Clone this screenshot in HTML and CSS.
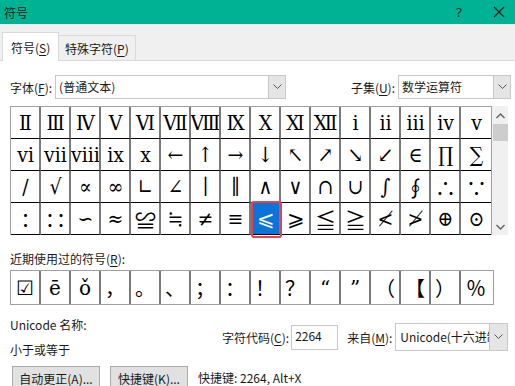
FILE: index.html
```html
<!DOCTYPE html>
<html lang="zh-CN">
<head>
    <meta charset="UTF-8">
    <title>符号</title>
    <link rel="stylesheet" href="styles.css">
</head>
<body>
<div class="dialog">
    <div class="titlebar">
        <span class="title">符号</span>
        <span class="help">?</span>
        <svg class="close" width="12" height="12" viewBox="0 0 12 12"><path d="M1 1L11 11M11 1L1 11" stroke="#1a1a1a" stroke-width="1.2" fill="none"/></svg>
    </div>

    <div class="tabs">
        <div class="tab active">符号(<u>S</u>)</div>
        <div class="tab">特殊字符(<u>P</u>)</div>
    </div>

    <div class="panel">
        <div class="font-row">
            <span class="label">字体(<u>F</u>):</span>
            <div class="select font-select">
                <span class="value">(普通文本)</span>
                <span class="arrow"><svg width="9" height="6" viewBox="0 0 9 6"><path d="M0.5 0.5L4.5 4.5L8.5 0.5" stroke="#555" fill="none"/></svg></span>
            </div>
            <span class="label subset-label">子集(<u>U</u>):</span>
            <div class="select subset-select">
                <span class="value">数学运算符</span>
                <span class="arrow"><svg width="9" height="6" viewBox="0 0 9 6"><path d="M0.5 0.5L4.5 4.5L8.5 0.5" stroke="#555" fill="none"/></svg></span>
            </div>
        </div>

        <div class="chars">
            <div class="grid">
                <div class="cell">Ⅱ</div><div class="cell">Ⅲ</div><div class="cell">Ⅳ</div><div class="cell">Ⅴ</div>
                <div class="cell">Ⅵ</div><div class="cell">Ⅶ</div><div class="cell">Ⅷ</div><div class="cell">Ⅸ</div>
                <div class="cell">Ⅹ</div><div class="cell">Ⅺ</div><div class="cell">Ⅻ</div><div class="cell">ⅰ</div>
                <div class="cell">ⅱ</div><div class="cell">ⅲ</div><div class="cell">ⅳ</div><div class="cell">ⅴ</div>

                <div class="cell">ⅵ</div><div class="cell">ⅶ</div><div class="cell">ⅷ</div><div class="cell">ⅸ</div>
                <div class="cell">ⅹ</div><div class="cell">←</div><div class="cell">↑</div><div class="cell">→</div>
                <div class="cell">↓</div><div class="cell">↖</div><div class="cell">↗</div><div class="cell">↘</div>
                <div class="cell">↙</div><div class="cell">∈</div><div class="cell">∏</div><div class="cell">∑</div>

                <div class="cell">∕</div><div class="cell">√</div><div class="cell">∝</div><div class="cell">∞</div>
                <div class="cell">∟</div><div class="cell">∠</div><div class="cell">∣</div><div class="cell">∥</div>
                <div class="cell">∧</div><div class="cell">∨</div><div class="cell">∩</div><div class="cell">∪</div>
                <div class="cell">∫</div><div class="cell">∮</div><div class="cell">∴</div><div class="cell">∵</div>

                <div class="cell">∶</div><div class="cell">∷</div><div class="cell">∽</div><div class="cell">≈</div>
                <div class="cell">≌</div><div class="cell">≒</div><div class="cell">≠</div><div class="cell">≡</div>
                <div class="cell selected">⩽</div><div class="cell">⩾</div><div class="cell">≦</div><div class="cell">≧</div>
                <div class="cell">≮</div><div class="cell">≯</div><div class="cell">⊕</div><div class="cell">⊙</div>
            </div>
            <div class="scrollbar">
                <svg class="scroll-up" width="9" height="6" viewBox="0 0 9 6"><path d="M0.5 5L4.5 1L8.5 5" stroke="#606060" stroke-width="1.4" fill="none"/></svg>
                <div class="thumb"></div>
                <svg class="scroll-down" width="9" height="6" viewBox="0 0 9 6"><path d="M0.5 1L4.5 5L8.5 1" stroke="#606060" stroke-width="1.4" fill="none"/></svg>
            </div>
        </div>

        <div class="recent-label">近期使用过的符号(<u>R</u>):</div>
        <div class="recent">
            <div class="cell">☑</div><div class="cell">ē</div><div class="cell">ǒ</div><div class="cell">，</div>
            <div class="cell">。</div><div class="cell">、</div><div class="cell">；</div><div class="cell">：</div>
            <div class="cell">！</div><div class="cell">？</div><div class="cell">“</div><div class="cell">”</div>
            <div class="cell">（</div><div class="cell">【</div><div class="cell">）</div><div class="cell">％</div>
        </div>

        <div class="info-row">
            <div class="names">
                <div>Unicode 名称:</div>
                <div>小于或等于</div>
            </div>
            <span class="label code-label">字符代码(<u>C</u>):</span>
            <div class="code-input">2264</div>
            <span class="label from-label">来自(<u>M</u>):</span>
            <div class="select from-select">
                <span class="value">Unicode(十六进制)</span>
                <span class="arrow"><svg width="9" height="6" viewBox="0 0 9 6"><path d="M0.5 0.5L4.5 4.5L8.5 0.5" stroke="#555" fill="none"/></svg></span>
            </div>
        </div>

        <div class="button-row">
            <div class="btn btn-auto">自动更正(<u>A</u>)...</div>
            <div class="btn btn-key">快捷键(<u>K</u>)...</div>
            <span class="shortcut">快捷键: 2264, Alt+X</span>
        </div>
    </div>
</div>
</body>
</html>
```

FILE: styles.css
```css
body {
    margin: 0;
    width: 515px;
    height: 386px;
    overflow: hidden;
    background: #ffffff;
    font-family: "Noto Sans CJK SC", "Noto Sans", sans-serif;
    font-size: 12px;
    color: #1a1a1a;
}
u {
    text-decoration-thickness: 1px;
    text-underline-offset: 2px;
}

.titlebar {
    height: 24px;
    background: #00b294;
    display: flex;
    align-items: center;
    padding-left: 4px;
}
.title {
    font-size: 12px;
    flex: 1;
}
.help {
    font-family: "Noto Sans", sans-serif;
    font-size: 13px;
    margin-right: 31px;
}
.close {
    margin-right: 10px;
}

.tabs {
    height: 37px;
    background: #f0f0f0;
    border-bottom: 1px solid #dadada;
    display: flex;
    align-items: flex-end;
    padding-left: 2px;
    box-sizing: border-box;
}
.tab {
    height: 25px;
    padding: 0 6px;
    border: 1px solid #dadada;
    border-bottom: none;
    border-left: none;
    display: flex;
    align-items: center;
    box-sizing: border-box;
}
.tab.active {
    height: 29px;
    width: 57px;
    background: #ffffff;
    border-left: 1px solid #dadada;
    margin-bottom: -1px;
    padding-left: 8px;
}

.panel {
    padding: 14px 4px 0 10px;
}

.font-row {
    display: flex;
    align-items: center;
    height: 24px;
}
.label {
    white-space: nowrap;
}
.select {
    height: 24px;
    border: 1px solid #c8c8c8;
    box-sizing: border-box;
    display: flex;
    align-items: stretch;
    background: #ffffff;
}
.select .value {
    flex: 1;
    padding-left: 3px;
    line-height: 21px;
    overflow: hidden;
    white-space: nowrap;
}
.select .arrow {
    width: 16px;
    background: #e5e5e5;
    border-left: 1px solid #c8c8c8;
    display: flex;
    align-items: center;
    justify-content: center;
}
.font-select {
    width: 231px;
    margin-left: 3px;
}
.subset-label {
    margin-left: auto;
    margin-right: 3px;
}
.subset-select {
    width: 113px;
}

.chars {
    display: flex;
    margin-top: 7px;
}
.grid {
    display: grid;
    grid-template-columns: repeat(16, 30px);
    border: 1px solid #a0a0a0;
    border-bottom: none;
}
.grid .cell {
    height: 31px;
    border-right: 2px solid #7a7a7a;
    border-bottom: 1px solid #000000;
    display: flex;
    align-items: center;
    justify-content: center;
    font-family: "DejaVu Serif Condensed", "DejaVu Serif", "Liberation Serif", serif;
    font-stretch: condensed;
    font-size: 21px;
    letter-spacing: -1px;
    color: #000000;
    overflow: hidden;
    white-space: nowrap;
}
.grid .cell:nth-child(16n) {
    border-right: none;
}
.grid .cell.selected {
    position: relative;
    background: #0a74d8;
    color: #ffffff;
    overflow: visible;
}
.grid .cell.selected::after {
    content: "";
    position: absolute;
    left: 0;
    top: -2px;
    right: -3px;
    bottom: -4px;
    border: 2px solid #e8404c;
    border-radius: 3px;
}
.scrollbar {
    width: 16px;
    background: #f0f0f0;
    display: flex;
    flex-direction: column;
    align-items: center;
    height: 129px;
}
.scroll-up {
    margin-top: 7px;
}
.thumb {
    width: 15px;
    height: 17px;
    background: #cdcdcd;
    margin-top: 5px;
}
.scroll-down {
    margin-top: auto;
    margin-bottom: 5px;
}

.recent-label {
    margin-top: 16px;
    line-height: 16px;
}
.recent {
    margin-top: 3px;
    display: grid;
    grid-template-columns: repeat(16, 30px);
    border: 1px solid #a0a0a0;
    width: 484px;
    box-sizing: border-box;
}
.recent .cell {
    height: 33px;
    border-right: 2px solid #7a7a7a;
    display: flex;
    align-items: center;
    justify-content: center;
    font-family: "DejaVu Serif", "Liberation Serif", "Noto Sans CJK SC", serif;
    font-size: 20px;
    color: #000000;
}
.recent .cell:last-child {
    border-right: none;
}

.info-row {
    display: flex;
    align-items: center;
    margin-top: 7px;
}
.names {
    width: 212px;
    line-height: 25px;
}
.code-input {
    width: 47px;
    height: 25px;
    border: 1px solid #c8c8c8;
    box-sizing: border-box;
    padding-left: 3px;
    line-height: 20px;
    margin-left: 2px;
}
.from-label {
    margin-left: 9px;
    margin-right: 3px;
}
.from-select {
    width: 113px;
    height: 28px;
    margin-right: -3px;
}
.from-select .value {
    line-height: 25px;
    padding-left: 4px;
}
.from-select .arrow {
    width: 17px;
}

.button-row {
    display: flex;
    align-items: flex-start;
    margin-top: 4px;
}
.btn {
    height: 24px;
    background: #e1e1e1;
    border: 1px solid #adadad;
    box-sizing: border-box;
    display: flex;
    align-items: center;
    justify-content: center;
}
.btn-auto {
    width: 88px;
    margin-left: 2px;
}
.btn-key {
    width: 78px;
    margin-left: 10px;
}
.shortcut {
    margin-left: 10px;
    line-height: 24px;
}
```
